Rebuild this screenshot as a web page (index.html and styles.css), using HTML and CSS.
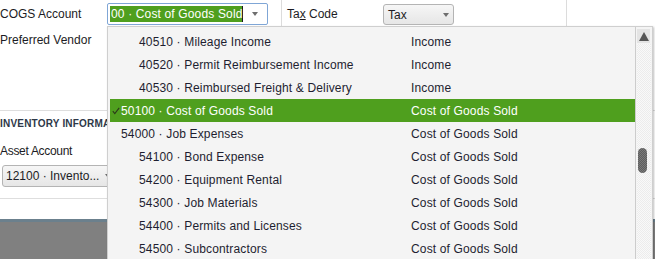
FILE: index.html
```html
<!DOCTYPE html>
<html lang="en">
<head>
    <meta charset="UTF-8">
    <title>Item - Account Picker</title>
    <link rel="stylesheet" href="styles.css">
</head>
<body>
    <div class="page">
        <div class="fields">
            <!-- COGS / Tax Code row -->
            <div class="top-row">
                <span class="label cogs-label">COGS Account</span>
                <div class="combo cogs-combo">
                    <span class="selected-text">00 · Cost of Goods Sold</span>
                    <span class="arrow"></span>
                </div>
                <div class="vsep first"></div>
                <span class="label tax-label">Ta<u>x</u> Code</span>
                <div class="combo tax-combo">
                    <span>Tax</span>
                    <span class="arrow"></span>
                </div>
                <div class="vsep second"></div>
            </div>

            <div class="label vendor">Preferred Vendor</div>

            <!-- Inventory section -->
            <div class="section">
                <div class="section-title">INVENTORY INFORMATION</div>
                <div class="label asset-label">Asset Account</div>
                <div class="combo asset-combo">
                    <span>12100 · Invento...</span>
                    <span class="arrow"></span>
                </div>
            </div>
        </div>

        <div class="backdrop"></div>

        <!-- Open account list -->
        <div class="dropdown">
            <ul class="list">
                <li class="item child"><span class="acct">40510 · Mileage Income</span><span class="type">Income</span></li>
                <li class="item child"><span class="acct">40520 · Permit Reimbursement Income</span><span class="type">Income</span></li>
                <li class="item child"><span class="acct">40530 · Reimbursed Freight &amp; Delivery</span><span class="type">Income</span></li>
                <li class="item parent selected">
                    <span class="acct">
                        <svg class="check" width="8" height="8" viewBox="0 0 8 8"><polyline points="0.8,4.2 2.8,6.6 7.2,0.8" fill="none" stroke="currentColor" stroke-width="1.1"/></svg>50100 · Cost of Goods Sold
                    </span>
                    <span class="type">Cost of Goods Sold</span>
                </li>
                <li class="item parent"><span class="acct">54000 · Job Expenses</span><span class="type">Cost of Goods Sold</span></li>
                <li class="item child"><span class="acct">54100 · Bond Expense</span><span class="type">Cost of Goods Sold</span></li>
                <li class="item child"><span class="acct">54200 · Equipment Rental</span><span class="type">Cost of Goods Sold</span></li>
                <li class="item child"><span class="acct">54300 · Job Materials</span><span class="type">Cost of Goods Sold</span></li>
                <li class="item child"><span class="acct">54400 · Permits and Licenses</span><span class="type">Cost of Goods Sold</span></li>
                <li class="item child"><span class="acct">54500 · Subcontractors</span><span class="type">Cost of Goods Sold</span></li>
            </ul>
            <div class="scrollbar">
                <div class="scroll-btn"><span class="up"></span></div>
                <div class="track">
                    <div class="thumb"></div>
                </div>
            </div>
        </div>
    </div>
</body>
</html>
```

FILE: styles.css
```css
body { margin: 0; font-family: "Liberation Sans", Arial, sans-serif; font-size: 12px; color: #1c1c24; background: #ffffff; }
.page { position: relative; width: 655px; height: 259px; overflow: hidden; }

/* form fields */
.fields { height: 219px; }
.top-row { display: flex; align-items: flex-start; height: 27px; }
.label { line-height: 14px; white-space: nowrap; }
.cogs-label { width: 107px; margin-top: 7px; }
.tax-label { width: 96px; margin-left: 5px; margin-top: 7px; }
.vsep { width: 1px; height: 27px; background: #dcdcdc; }
.vsep.first { margin-left: 13px; }
.vsep.second { margin-left: 112px; }

.combo { display: flex; align-items: center; box-sizing: border-box; border: 1px solid #b4b4b4; border-radius: 3px; background: linear-gradient(#f6f6f6, #e6e6e6); white-space: nowrap; }
.arrow { width: 0; height: 0; border-left: 3.5px solid transparent; border-right: 3.5px solid transparent; border-top: 4px solid #6e6e6e; margin-left: auto; }

.cogs-combo { width: 161px; height: 22px; margin-top: 3px; padding: 0 9px 0 2px; background: #ffffff; border-color: #7fa6d6; border-radius: 2px; }
.selected-text { background: #4f9f1e; color: #ffffff; line-height: 16px; padding-left: 1px; width: 131px; border-right: 1px solid #1c1c24; letter-spacing: 0.15px; }

.tax-combo { width: 71px; height: 21px; margin-top: 4px; padding: 0 4px 0 4px; }

.vendor { margin-top: 6px; }

.section { margin-top: 63px; border-top: 1px solid #dedede; border-bottom: 1px solid #dedede; padding-bottom: 11px; }
.section-title { font-size: 10px; font-weight: bold; line-height: 12px; color: #2e3848; padding-top: 7px; letter-spacing: 0.2px; }
.asset-label { margin-top: 14px; letter-spacing: -0.3px; }
.asset-combo { width: 113px; height: 22px; margin-top: 7px; margin-left: 2px; padding: 0 3px 0 3px; }

.backdrop { height: 40px; border-top: 3px solid #6b808d; background: #808080; }

/* dropdown list */
.dropdown { position: absolute; left: 107px; top: 26px; width: 546px; height: 240px; box-sizing: border-box; border: 1px solid #cfcfcf; background: #f4f4f4; box-shadow: 1px 1px 2px rgba(0, 0, 0, 0.25); display: flex; }
.list { list-style: none; margin: 0; padding: 3px 0 0 2px; width: 526px; }
.item { display: flex; align-items: center; height: 23px; color: #1e1e30; white-space: nowrap; letter-spacing: 0.15px; }
.item .acct { display: flex; align-items: center; width: 301px; box-sizing: border-box; }
.item.child .acct { padding-left: 29px; }
.item.parent .acct { padding-left: 11px; }
.item.selected { background: #4f9f1e; color: #ffffff; }
.item.selected .acct { padding-left: 2px; }
.check { color: #2b3a1a; margin-right: 1px; margin-top: 1px; }

.scrollbar { width: 16px; border-left: 1px solid #cccccc; display: flex; flex-direction: column; }
.scroll-btn { height: 14px; width: 13px; margin: 2px 0 0 1px; background: #e4e4e4; display: flex; align-items: center; justify-content: center; }
.up { width: 0; height: 0; border-left: 5px solid transparent; border-right: 5px solid transparent; border-bottom: 9px solid #555555; }
.track { flex: 1; margin: 1px 1px 0 1px; background: repeating-conic-gradient(#ececec 0 25%, #f9f9f9 0 50%) 0 0 / 2px 2px; }
.thumb { width: 9px; height: 25px; margin: 104px 0 0 1px; border-radius: 5px; background: repeating-conic-gradient(#5e5e5e 0 25%, #7a7a7a 0 50%) 0 0 / 2px 2px; }
```
